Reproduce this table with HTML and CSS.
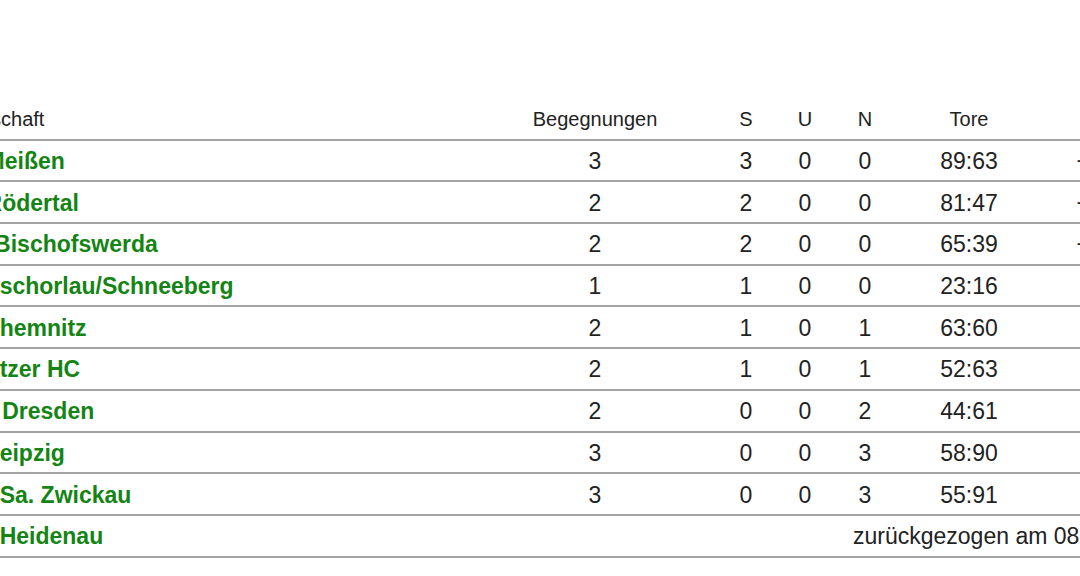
FILE: index.html
```html
<!DOCTYPE html>
<html lang="de">
<head>
<meta charset="utf-8">
<title>Tabelle</title>
<link rel="stylesheet" href="styles.css">
</head>
<body>
<div class="viewport">
  <table class="standings">
    <colgroup>
      <col class="c-team"><col class="c-beg"><col class="c-s"><col class="c-u"><col class="c-n"><col class="c-tore"><col class="c-diff"><col class="c-pkt">
    </colgroup>
    <thead>
      <tr>
        <th class="team">Mannschaft</th>
        <th>Begegnungen</th>
        <th>S</th>
        <th>U</th>
        <th>N</th>
        <th>Tore</th>
        <th>Diff</th>
        <th>Punkte</th>
      </tr>
    </thead>
    <tbody>
      <tr><td class="team">HC Meißen</td><td>3</td><td>3</td><td>0</td><td>0</td><td>89:63</td><td class="diff">+26</td><td>6:0</td></tr>
      <tr><td class="team">HC Rödertal</td><td>2</td><td>2</td><td>0</td><td>0</td><td>81:47</td><td class="diff">+34</td><td>4:0</td></tr>
      <tr><td class="team">TuS Bischofswerda</td><td>2</td><td>2</td><td>0</td><td>0</td><td>65:39</td><td class="diff">+26</td><td>4:0</td></tr>
      <tr><td class="team">SG Zschorlau/Schneeberg</td><td>1</td><td>1</td><td>0</td><td>0</td><td>23:16</td><td class="diff">+7</td><td>2:0</td></tr>
      <tr><td class="team">SV Chemnitz</td><td>2</td><td>1</td><td>0</td><td>1</td><td>63:60</td><td class="diff">+3</td><td>2:2</td></tr>
      <tr><td class="team">Görlitzer HC</td><td>2</td><td>1</td><td>0</td><td>1</td><td>52:63</td><td class="diff">-11</td><td>2:2</td></tr>
      <tr><td class="team">HSG Dresden</td><td>2</td><td>0</td><td>0</td><td>2</td><td>44:61</td><td class="diff">-17</td><td>0:4</td></tr>
      <tr><td class="team">HC Leipzig</td><td>3</td><td>0</td><td>0</td><td>3</td><td>58:90</td><td class="diff">-32</td><td>0:6</td></tr>
      <tr><td class="team">BSV Sa. Zwickau</td><td>3</td><td>0</td><td>0</td><td>3</td><td>55:91</td><td class="diff">-36</td><td>0:6</td></tr>
      <tr><td class="team">HSV Heidenau</td><td></td><td></td><td></td><td colspan="4" class="note">zurückgezogen am 08.10.2018</td></tr>
    </tbody>
  </table>
</div>
</body>
</html>
```

FILE: styles.css
```css
html, body {
  margin: 0;
  padding: 0;
  background: #ffffff;
}

.viewport {
  width: 1080px;
  height: 576px;
  overflow: hidden;
}

.standings {
  margin-top: 99px;
  margin-left: -59px;
  border-collapse: collapse;
  table-layout: fixed;
  width: 1319px;
  font-family: "Liberation Sans", Arial, sans-serif;
  color: #222222;
}

.c-team { width: 533px; }
.c-beg  { width: 242px; }
.c-s    { width: 60px; }
.c-u    { width: 58px; }
.c-n    { width: 62px; }
.c-tore { width: 146px; }
.c-diff { width: 106px; }
.c-pkt  { width: 112px; }

.standings th,
.standings td {
  padding: 2px 0 0 0;
  height: 37.7px;
  text-align: center;
  vertical-align: middle;
  border-bottom: 2px solid #a4a4a4;
  white-space: nowrap;
}

.standings th {
  font-size: 20px;
  font-weight: normal;
  color: #222222;
}

.standings td {
  font-size: 23px;
}

.standings th.team {
  text-align: left;
}

.standings td.team {
  text-align: left;
  padding-left: 5px;
  font-weight: bold;
  color: #148414;
}

.standings td.diff {
  padding-left: 2px;
}

.standings td.note {
  text-align: left;
  padding-left: 19px;
}
```
